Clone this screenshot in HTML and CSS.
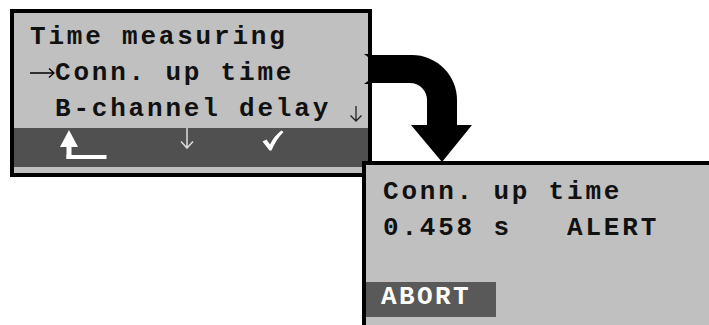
FILE: index.html
```html
<!DOCTYPE html>
<html lang="en">
<head>
    <meta charset="UTF-8">
    <meta name="viewport" content="width=device-width, initial-scale=1.0">
    <title>Time measuring</title>
    <link rel="stylesheet" href="styles.css">
</head>
<body>

    <!-- menu screen -->
    <div class="screen menu-screen">
        <div class="lines">
            <div class="row">Time measuring</div>
            <div class="row">
                <svg class="marker" width="25" height="12" viewBox="0 0 25 12">
                    <path d="M0 6 H24 M19 1.5 L24 6 L19 10.5" fill="none" stroke="#000" stroke-width="1.3"/>
                </svg>
                <span>Conn. up time</span>
            </div>
            <div class="row">
                <span class="marker"></span>
                <span>B-channel delay</span>
                <svg class="more" width="14" height="16" viewBox="0 0 14 16">
                    <path d="M7 0 V15 M1.5 9.5 L7 15 L12.5 9.5" fill="none" stroke="#222" stroke-width="1.3"/>
                </svg>
            </div>
        </div>
        <div class="keys">
            <svg class="key-back" width="47" height="30" viewBox="0 0 47 30">
                <path d="M9 0 L0 17 H18 Z" fill="#fff"/>
                <rect x="6.5" y="16" width="5" height="13" fill="#fff"/>
                <rect x="6.5" y="25" width="40" height="4" fill="#fff"/>
            </svg>
            <svg class="key-down" width="14" height="21" viewBox="0 0 14 21">
                <path d="M7 0 V20 M1 13.5 L7 20 L13 13.5" fill="none" stroke="#ddd" stroke-width="1.5"/>
            </svg>
            <svg class="key-ok" width="22" height="21" viewBox="0 0 22 21">
                <path d="M0.5 11.5 L4.5 9.5 L8 14.5 Q12 6 19.5 0.5 L21.5 2 Q14 9.5 9.5 20.5 L7.5 20.5 Z" fill="#fff"/>
            </svg>
        </div>
    </div>

    <!-- curved arrow between the screens -->
    <svg class="flow-arrow" width="120" height="115" viewBox="0 0 120 115">
        <path d="M11 5 H52 A45 45 0 0 1 97 50 V75 H112 L82 112 L51 75 H67 V50 A17 17 0 0 0 50 33 H11 Z" fill="#000"/>
        <path d="M4 4 L12 10 V4 Z M4 34 L12 28 V34 Z" fill="#000"/>
    </svg>

    <!-- result screen -->
    <div class="screen result-screen">
        <div class="lines">
            <div class="row">Conn. up time</div>
            <div class="row">0.458 s   ALERT</div>
        </div>
        <div class="soft-key">ABORT</div>
    </div>

</body>
</html>
```

FILE: styles.css
```css
body {
    margin: 0;
    width: 709px;
    height: 325px;
    overflow: hidden;
    position: relative;
    background: #fff;
    font-family: "Liberation Mono", "DejaVu Sans Mono", monospace;
    font-weight: bold;
    font-size: 26px;
    letter-spacing: 2.8px;
    color: #111;
}

.screen {
    position: absolute;
    background: #c0c0c0;
    border: 4px solid #000;
    box-sizing: border-box;
}

.menu-screen {
    left: 10px;
    top: 9px;
    width: 362px;
    height: 168px;
    padding-bottom: 5px;
    display: flex;
    flex-direction: column;
}

.menu-screen .lines {
    height: 115px;
    padding: 6px 0 0 16px;
    box-sizing: border-box;
}

.row {
    display: flex;
    align-items: center;
    height: 36px;
    line-height: 36px;
    white-space: pre;
}

.marker {
    width: 25px;
    flex: none;
}

.more {
    align-self: flex-end;
    margin: 0 0 5px 18px;
}

.keys {
    height: 39px;
    background: #505050;
    display: flex;
    align-items: flex-start;
}

.key-back {
    margin: 2px 0 0 46px;
}

.key-down {
    margin-left: 73px;
}

.key-ok {
    margin: 2px 0 0 68px;
}

.flow-arrow {
    position: absolute;
    left: 360px;
    top: 50px;
}

.result-screen {
    left: 362px;
    top: 161px;
    width: 347px;
    height: 164px;
    border-right: 0;
    border-bottom: 0;
}

.result-screen .lines {
    padding: 9px 0 0 17px;
}

.soft-key {
    width: 130px;
    height: 35px;
    margin-top: 36px;
    padding: 0 0 5px 15px;
    box-sizing: border-box;
    line-height: 30px;
    background: #595959;
    color: #fff;
    letter-spacing: 2.4px;
}
```
